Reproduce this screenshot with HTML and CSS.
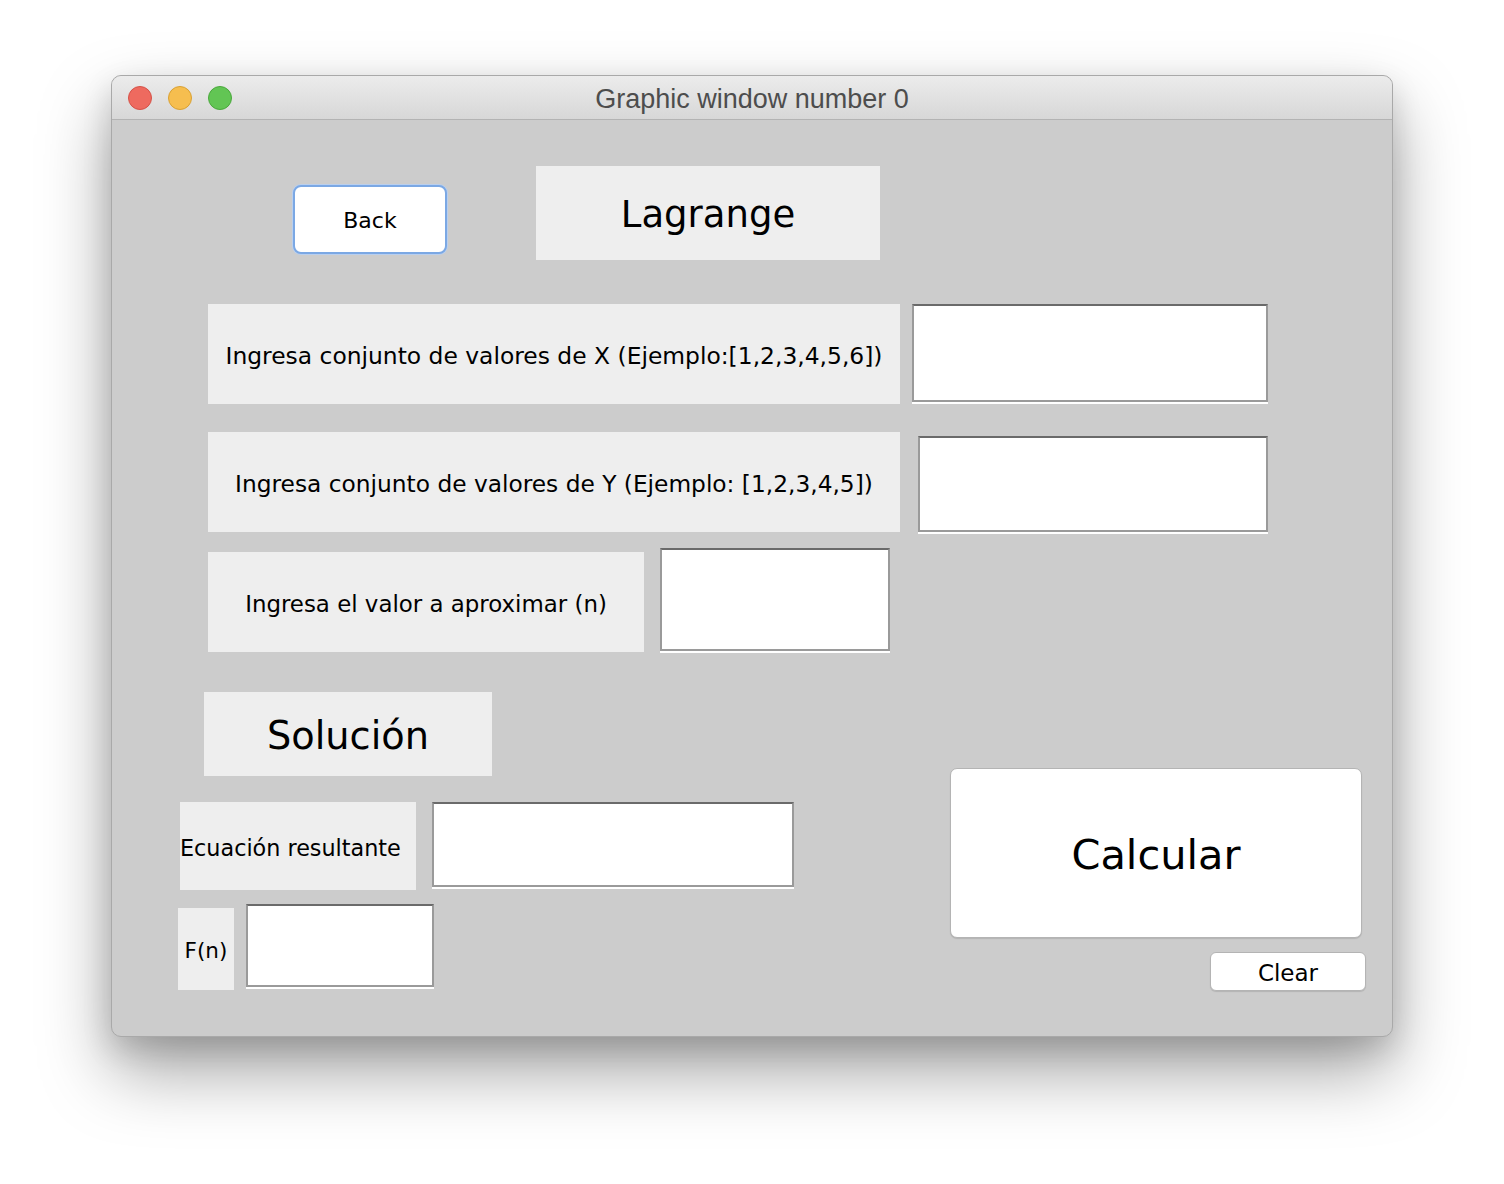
FILE: index.html
```html
<!DOCTYPE html>
<html lang="es">
<head>
<meta charset="utf-8">
<title>Graphic window number 0</title>
<link rel="stylesheet" href="styles.css">
</head>
<body>
<div class="window">
  <div class="titlebar">
    <div class="lights">
      <span class="light red"></span>
      <span class="light yellow"></span>
      <span class="light green"></span>
    </div>
    <div class="title">Graphic window number 0</div>
  </div>
  <div class="content">
    <div class="row-top">
      <button class="btn back">Back</button>
      <div class="label heading lagrange">Lagrange</div>
    </div>
    <div class="row row-x">
      <div class="label lbl-x">Ingresa conjunto de valores de X (Ejemplo:[1,2,3,4,5,6])</div>
      <div class="field fld-x"></div>
    </div>
    <div class="row row-y">
      <div class="label lbl-y">Ingresa conjunto de valores de Y (Ejemplo: [1,2,3,4,5])</div>
      <div class="field fld-y"></div>
    </div>
    <div class="row row-n">
      <div class="label lbl-n">Ingresa el valor a aproximar (n)</div>
      <div class="field fld-n"></div>
    </div>
    <div class="lower">
      <div class="left-col">
        <div class="label heading solucion">Solución</div>
        <div class="row row-eq">
          <div class="label lbl-eq">Ecuación resultante</div>
          <div class="field fld-eq"></div>
        </div>
        <div class="row row-fn">
          <div class="label lbl-fn">F(n)</div>
          <div class="field fld-fn"></div>
        </div>
      </div>
      <div class="right-col">
        <button class="btn calcular">Calcular</button>
        <button class="btn clear">Clear</button>
      </div>
    </div>
  </div>
</div>
</body>
</html>
```

FILE: styles.css
```css
html, body {
  margin: 0;
  padding: 0;
  background: #ffffff;
}
body {
  width: 1504px;
  height: 1184px;
  overflow: hidden;
  font-family: "DejaVu Sans", "Liberation Sans", sans-serif;
}
.window {
  margin: 75px 0 0 111px;
  width: 1282px;
  height: 962px;
  box-sizing: border-box;
  border-radius: 10px;
  background: #cccccc;
  border: 1px solid #a9a9a9;
  box-shadow: 0 34px 70px rgba(0, 0, 0, 0.36), 0 12px 30px rgba(0, 0, 0, 0.14);
  overflow: hidden;
}
.titlebar {
  height: 43px;
  border-bottom: 1px solid #b3b3b3;
  background: linear-gradient(#ececec, #d7d7d7);
  display: flex;
  align-items: center;
  position: relative;
}
.lights {
  display: flex;
  gap: 16px;
  padding-left: 16px;
}
.light {
  width: 22px;
  height: 22px;
  border-radius: 50%;
  display: block;
}
.red { background: #ee6a5f; border: 1px solid #d55248; }
.yellow { background: #f6be4f; border: 1px solid #d9a134; }
.green { background: #62c554; border: 1px solid #4aa83c; }
.title {
  position: absolute;
  left: 0;
  right: 0;
  top: 2px;
  text-align: center;
  font-family: "Liberation Sans", Arial, sans-serif;
  font-size: 27px;
  color: #4d4d4d;
  line-height: 43px;
}
.content {
  height: 917px;
}
.label {
  background: #eeeeee;
  color: #000;
  display: flex;
  align-items: center;
  justify-content: center;
  box-sizing: border-box;
  white-space: nowrap;
  font-size: 23.4px;
  padding-top: 3px;
}
.heading {
  font-size: 37px;
  padding-top: 2px;
}
.field {
  background: #ffffff;
  box-sizing: border-box;
  border: 2px solid #9a9a9a;
  border-top-color: #6a6a6a;
  box-shadow: 0 2px 0 #ffffff;
}
.btn {
  font-family: "DejaVu Sans", "Liberation Sans", sans-serif;
  background: #ffffff;
  color: #000;
  padding: 2px 0 0 0;
  box-sizing: border-box;
  cursor: pointer;
}
.row {
  display: flex;
  align-items: flex-start;
}
.row-top {
  display: flex;
  align-items: flex-start;
  padding-top: 46px;
  padding-left: 181px;
}
.back {
  margin-top: 19px;
  width: 154px;
  height: 69px;
  border: 2px solid #7ba8e4;
  border-radius: 8px;
  font-size: 22px;
  box-shadow: 0 0 0 1px #b9cfee;
}
.lagrange {
  margin-left: 89px;
  width: 344px;
  height: 94px;
}
.row-x {
  margin-top: 44px;
  padding-left: 96px;
}
.lbl-x { width: 692px; height: 100px; }
.fld-x { margin-left: 12px; width: 356px; height: 98px; }
.row-y {
  margin-top: 28px;
  padding-left: 96px;
}
.lbl-y { width: 692px; height: 100px; font-size: 23.3px; }
.fld-y { margin-left: 18px; margin-top: 4px; width: 350px; height: 96px; }
.row-n {
  margin-top: 16px;
  padding-left: 96px;
}
.lbl-n { margin-top: 4px; width: 436px; height: 100px; font-size: 22.9px; }
.fld-n { margin-left: 16px; width: 230px; height: 103px; }
.lower {
  display: flex;
  align-items: flex-start;
  margin-top: 40px;
}
.left-col {
  width: 700px;
}
.solucion {
  margin-left: 92px;
  width: 288px;
  height: 84px;
  font-size: 38.3px;
}
.row-eq {
  margin-top: 26px;
  padding-left: 68px;
}
.lbl-eq {
  width: 236px;
  height: 88px;
  justify-content: flex-start;
  font-size: 22.3px;
}
.fld-eq { margin-left: 16px; width: 362px; height: 85px; }
.row-fn {
  margin-top: 14px;
  padding-left: 66px;
}
.lbl-fn { margin-top: 4px; width: 56px; height: 82px; font-size: 21.5px; }
.fld-fn { margin-left: 12px; width: 188px; height: 83px; }
.right-col {
  margin-left: 138px;
  padding-top: 76px;
  display: flex;
  flex-direction: column;
  align-items: flex-start;
}
.calcular {
  width: 412px;
  height: 170px;
  border: 1px solid #b4b4b4;
  border-radius: 7px;
  font-size: 41.5px;
  box-shadow: 0 1px 1px rgba(0, 0, 0, 0.12);
}
.clear {
  margin-top: 14px;
  margin-left: 260px;
  width: 156px;
  height: 39px;
  border: 1px solid #b4b4b4;
  border-radius: 6px;
  font-size: 23px;
  box-shadow: 0 1px 1px rgba(0, 0, 0, 0.12);
}
```
